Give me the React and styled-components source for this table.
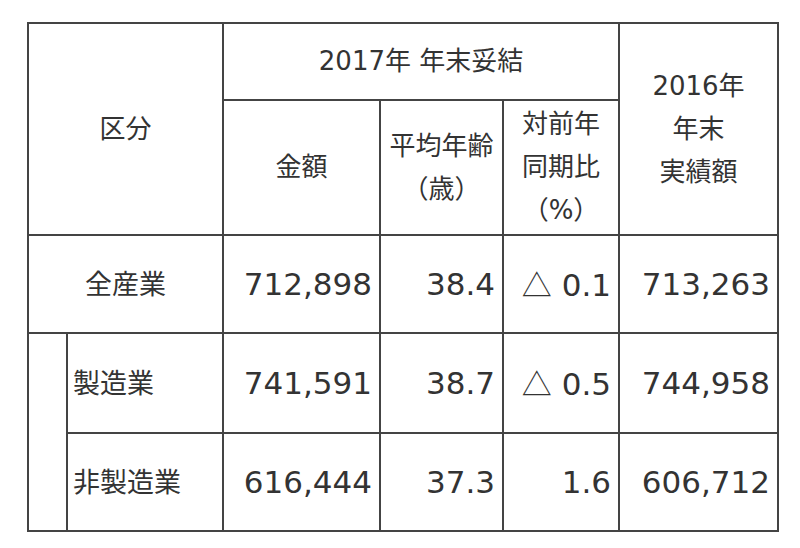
import React from "react";
import styled, { createGlobalStyle } from "styled-components";

const GlobalStyle = createGlobalStyle`
  html, body {
    margin: 0;
    padding: 0;
    background: #ffffff;
  }
  body {
    font-family: "DejaVu Sans", "Noto Sans CJK JP", sans-serif;
    color: #333333;
  }
`;

const Page = styled.div`
  width: 800px;
  height: 548px;
  padding: 22px 0 0 27px;
  box-sizing: border-box;
`;

const Table = styled.table`
  border-collapse: collapse;
  table-layout: fixed;
  width: 750px;
  border: 2px solid #444;
`;

const Cell = styled.td`
  border: 2px solid #444;
  padding: 0 8px;
  vertical-align: middle;
  text-align: ${(p) => p.$align || "center"};
  font-size: 27px;
  line-height: 43px;
  white-space: nowrap;
  overflow: hidden;
`;

const HeadCell = styled(Cell)`
  font-size: 26px;
`;

const LabelCell = styled(Cell)`
  padding-left: ${(p) => (p.$align === "left" ? "5px" : "8px")};
`;

const NumCell = styled(Cell)`
  text-align: right;
  font-size: 31px;
  padding-right: 7px;
`;

const Tri = styled.span`
  font-family: "Noto Sans CJK JP", sans-serif;
  font-size: 30px;
  margin-right: 10px;
`;

const HeadRow = styled.tr`
  height: ${(p) => p.$h}px;
`;

const BodyRow = styled.tr`
  height: ${(p) => p.$h}px;
`;

function Rate({ value }) {
  const neg = value.startsWith("-");
  return (
    <NumCell>
      {neg && <Tri>△</Tri>}
      {neg ? value.slice(1) : value}
    </NumCell>
  );
}

const rows = [
  { amount: "741,591", age: "38.7", rate: "-0.5", prev: "744,958", label: "製造業" },
  { amount: "616,444", age: "37.3", rate: "1.6", prev: "606,712", label: "非製造業" },
];

export default function App() {
  return (
    <Page>
      <GlobalStyle />
      <Table>
        <colgroup>
          <col style={{ width: 39 }} />
          <col style={{ width: 156 }} />
          <col style={{ width: 157 }} />
          <col style={{ width: 123 }} />
          <col style={{ width: 116 }} />
          <col style={{ width: 159 }} />
        </colgroup>
        <tbody>
          <HeadRow $h={77}>
            <HeadCell rowSpan={2} colSpan={2}>区分</HeadCell>
            <HeadCell colSpan={3}>2017年 年末妥結</HeadCell>
            <HeadCell rowSpan={2}>
              2016年
              <br />
              年末
              <br />
              実績額
            </HeadCell>
          </HeadRow>
          <HeadRow $h={135}>
            <HeadCell>金額</HeadCell>
            <HeadCell>
              平均年齢
              <br />
              （歳）
            </HeadCell>
            <HeadCell>
              対前年
              <br />
              同期比
              <br />
              （%）
            </HeadCell>
          </HeadRow>
          <BodyRow $h={98}>
            <LabelCell colSpan={2}>全産業</LabelCell>
            <NumCell>712,898</NumCell>
            <NumCell>38.4</NumCell>
            <Rate value="-0.1" />
            <NumCell>713,263</NumCell>
          </BodyRow>
          {rows.map((r, i) => (
            <BodyRow $h={i === 0 ? 100 : 98} key={r.label}>
              {i === 0 && <Cell rowSpan={2} />}
              <LabelCell $align="left">{r.label}</LabelCell>
              <NumCell>{r.amount}</NumCell>
              <NumCell>{r.age}</NumCell>
              <Rate value={r.rate} />
              <NumCell>{r.prev}</NumCell>
            </BodyRow>
          ))}
        </tbody>
      </Table>
    </Page>
  );
}
